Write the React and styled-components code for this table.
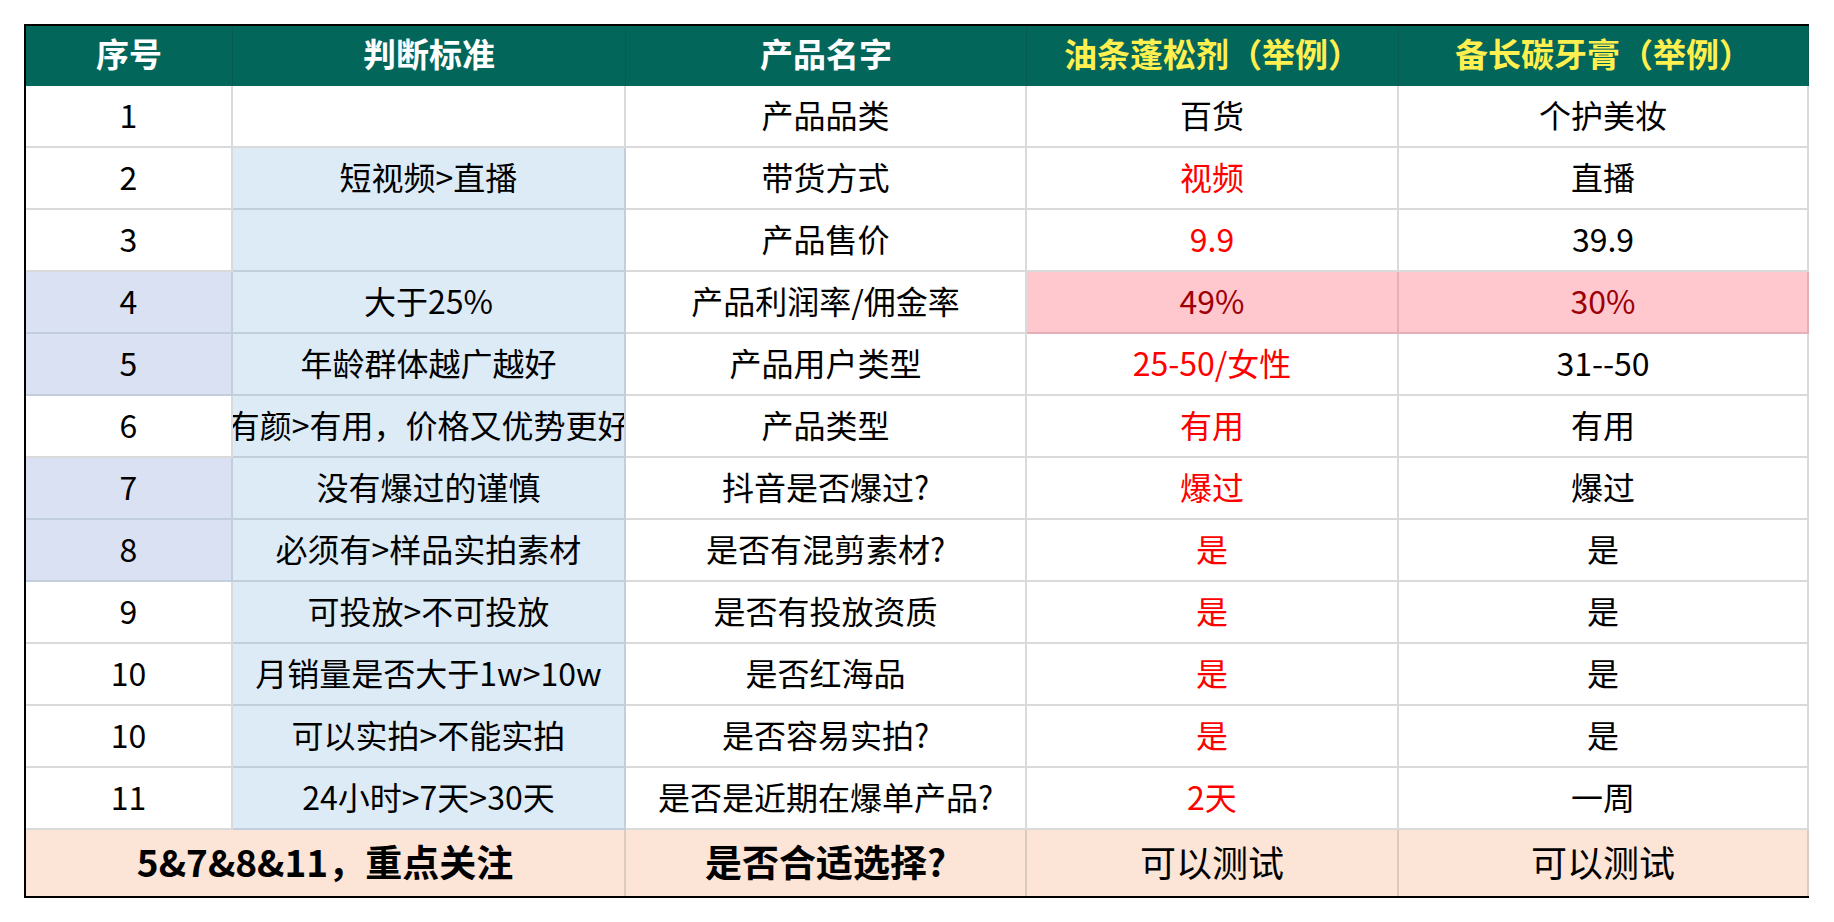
import styled, { createGlobalStyle } from "styled-components";

const GlobalStyle = createGlobalStyle`
  html, body {
    margin: 0;
    padding: 0;
    background: #ffffff;
  }
  body {
    font-family: "Noto Sans CJK SC", "Microsoft YaHei", "Noto Sans", sans-serif;
  }
`

const Page = styled.div`
  padding: 24px 0 0 24px;
`

const Table = styled.div`
  display: grid;
  grid-template-columns: 207px 393px 401px 372px 410px;
  grid-template-rows: 60px repeat(12, 62px) 66px;
  width: max-content;
  border-top: 2px solid #000;
  border-left: 2px solid #000;
  border-bottom: 2px solid #000;
`

const HeadCell = styled.div`
  display: flex;
  align-items: center;
  justify-content: center;
  padding-bottom: 6px;
  box-sizing: border-box;
  background: #02665a;
  color: ${(p) => (p.$accent ? "#fff04f" : "#ffffff")};
  font-size: 33px;
  font-weight: 700;
  border-right: 1px solid #0b5a4f;
  white-space: nowrap;
`

const Cell = styled.div`
  display: flex;
  align-items: center;
  justify-content: center;
  overflow: hidden;
  white-space: nowrap;
  box-sizing: border-box;
  padding-bottom: 5px;
  background: ${(p) => p.$bg || "#ffffff"};
  color: ${(p) => p.$color || "#000000"};
  font-size: 32px;
  border-right: 2px solid ${(p) => p.$line || "#dadada"};
  border-bottom: 2px solid ${(p) => p.$line || "#dadada"};
`

const FootCell = styled.div`
  display: flex;
  align-items: center;
  justify-content: center;
  white-space: nowrap;
  box-sizing: border-box;
  padding-bottom: 4px;
  background: #fce4d6;
  color: #000;
  font-size: ${(p) => (p.$bold ? "37px" : "36px")};
  font-weight: ${(p) => (p.$bold ? 700 : 400)};
  grid-column: span ${(p) => p.$span || 1};
  border-right: 2px solid #dccbc0;
`

const BLUE = "#ddebf7";
const LAVENDER = "#d9e1f2";
const BLUE_LINE = "#c3cedd";
const RED = "#ff0000";

const rows = [
  { no: "1", rule: "", name: "产品品类", a: "百货", b: "个护美妆" },
  { no: "2", rule: "短视频>直播", name: "带货方式", a: "视频", b: "直播" },
  { no: "3", rule: "", name: "产品售价", a: "9.9", b: "39.9" },
  { no: "4", rule: "大于25%", name: "产品利润率/佣金率", a: "49%", b: "30%", mark: true, lav: true },
  { no: "5", rule: "年龄群体越广越好", name: "产品用户类型", a: "25-50/女性", b: "31--50", lav: true },
  { no: "6", rule: "有颜>有用，价格又优势更好", name: "产品类型", a: "有用", b: "有用" },
  { no: "7", rule: "没有爆过的谨慎", name: "抖音是否爆过?", a: "爆过", b: "爆过", lav: true },
  { no: "8", rule: "必须有>样品实拍素材", name: "是否有混剪素材?", a: "是", b: "是", lav: true },
  { no: "9", rule: "可投放>不可投放", name: "是否有投放资质", a: "是", b: "是" },
  { no: "10", rule: "月销量是否大于1w>10w", name: "是否红海品", a: "是", b: "是" },
  { no: "10", rule: "可以实拍>不能实拍", name: "是否容易实拍?", a: "是", b: "是" },
  { no: "11", rule: "24小时>7天>30天", name: "是否是近期在爆单产品?", a: "2天", b: "一周" },
];

const App = () => {
  return (
    <Page>
      <GlobalStyle />
      <Table>
        <HeadCell>序号</HeadCell>
        <HeadCell>判断标准</HeadCell>
        <HeadCell>产品名字</HeadCell>
        <HeadCell $accent>油条蓬松剂（举例）</HeadCell>
        <HeadCell $accent>备长碳牙膏（举例）</HeadCell>

        {rows.map((r, i) => {
          const ruleBlue = i > 0;
          return [
            <Cell key={`n${i}`} $bg={r.lav ? LAVENDER : undefined} $line={r.lav ? BLUE_LINE : undefined}>
              {r.no}
            </Cell>,
            <Cell key={`r${i}`} $bg={ruleBlue ? BLUE : undefined} $line={ruleBlue ? BLUE_LINE : undefined}>
              {r.rule}
            </Cell>,
            <Cell key={`p${i}`}>{r.name}</Cell>,
            <Cell
              key={`a${i}`}
              $bg={r.mark ? "#ffc7ce" : undefined}
              $line={r.mark ? "#e3b0b7" : undefined}
              $color={r.mark ? "#9c0006" : i === 0 ? "#000" : RED}
            >
              {r.a}
            </Cell>,
            <Cell
              key={`b${i}`}
              $bg={r.mark ? "#ffc7ce" : undefined}
              $line={r.mark ? "#e3b0b7" : undefined}
              $color={r.mark ? "#9c0006" : undefined}
            >
              {r.b}
            </Cell>,
          ];
        })}

        <FootCell $span={2} $bold>5&amp;7&amp;8&amp;11，重点关注</FootCell>
        <FootCell $bold>是否合适选择?</FootCell>
        <FootCell>可以测试</FootCell>
        <FootCell>可以测试</FootCell>
      </Table>
    </Page>
  )
};

export default App;
